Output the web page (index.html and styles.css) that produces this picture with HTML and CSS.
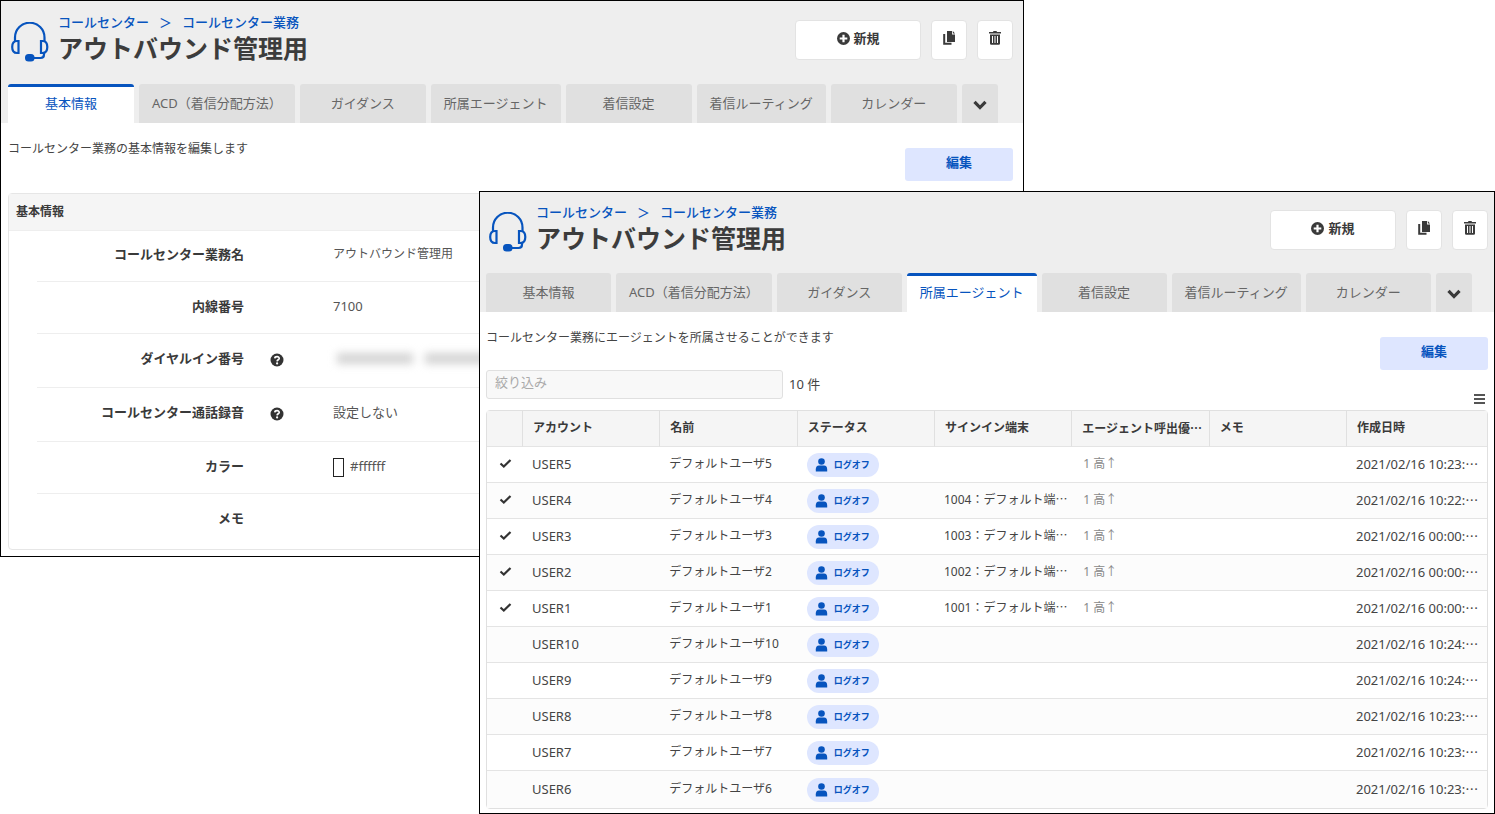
FILE: index.html
```html
<!DOCTYPE html>
<html lang="ja">
<head>
<meta charset="utf-8">
<meta name="viewport" content="width=device-width, initial-scale=1">
<title>コールセンター業務</title>
<link rel="stylesheet" href="styles.css">
</head>
<body>
<svg class="symbols" aria-hidden="true">
  <symbol id="headset" viewBox="0 0 38 40"><g fill="none" stroke="currentColor" stroke-width="2.200"><path d="M4 20V15.500a14.500 14.500 0 0 1 29.500 0V20"/><path d="M7.500 19H6q-4.800 0-4.800 6t4.800 6h1.500zM30 19h1.500q4.800 0 4.800 6t-4.800 6H30z"/><path d="M33 31v1.500q0 3.500-3.500 3.500H21"/></g><rect x="14" y="32" width="9.500" height="7.500" rx="3.500" fill="currentColor"/></symbol>
  <symbol id="plus" viewBox="0 0 12 12"><circle cx="6" cy="6" r="6" fill="currentColor"/><path d="M6 2.500v7M2.500 6h7" stroke="#fff" stroke-width="2"/></symbol>
  <symbol id="copy" viewBox="0 0 12 14"><path d="M4 0h5v3.500h3V11H4z" fill="currentColor"/><path d="M9.800 0L12 2.600H9.800z" fill="currentColor"/><path d="M1.200 3v9.800h7.300" fill="none" stroke="currentColor" stroke-width="2"/></symbol>
  <symbol id="trash" viewBox="0 0 12 14"><path d="M0 1h4l.5-1h3l.5 1h4v1.500H0zM1 3.500h10V12.500a1.300 1.300 0 0 1-1.300 1.300H2.300A1.300 1.300 0 0 1 1 12.500z" fill="currentColor"/><path d="M3.500 5v7M6 5v7M8.500 5v7" stroke="#fff" stroke-width="1"/></symbol>
  <symbol id="chevron" viewBox="0 0 14 10"><path d="M1.500 1.800L7 7.500l5.500-5.700" fill="none" stroke="currentColor" stroke-width="3.200"/></symbol>
  <symbol id="help" viewBox="0 0 14 14"><circle cx="7" cy="7" r="6.500" fill="currentColor"/><path d="M4.800 5.300C5 3.100 9.300 3.100 9.200 5.400 9.100 6.900 7.200 6.700 7.100 8.400" fill="none" stroke="#fff" stroke-width="1.700"/><circle cx="7.100" cy="10.400" r="1.100" fill="#fff"/></symbol>
  <symbol id="check" viewBox="0 0 12 9"><path d="M1 4.500l3.300 3L11 1" fill="none" stroke="currentColor" stroke-width="2.200"/></symbol>
  <symbol id="user" viewBox="0 0 12 14"><circle cx="6" cy="3.500" r="3.300" fill="currentColor"/><path d="M.3 13.500v-2.200Q.3 7.800 3.500 7.600h5q3.200.2 3.200 3.700v2.200z" fill="currentColor"/></symbol>
  <symbol id="menu" viewBox="0 0 11 10"><path d="M0 1h11M0 5h11M0 9h11" stroke="currentColor" stroke-width="2"/></symbol>
</svg>

<div class="stage">
  <section class="window window-back">
    <header class="window-head">
      <div class="title-row">
        <svg class="headset"><use href="#headset"/></svg>
        <div class="titles">
          <nav class="crumbs"><a href="#">コールセンター</a><span class="sep">＞</span><a href="#">コールセンター業務</a></nav>
          <h1>アウトバウンド管理用</h1>
        </div>
        <div class="actions">
          <button class="btn btn-new" type="button"><svg class="ico-plus"><use href="#plus"/></svg>新規</button>
          <button class="btn btn-icon" type="button" aria-label="コピー"><svg class="ico-act"><use href="#copy"/></svg></button>
          <button class="btn btn-icon" type="button" aria-label="削除"><svg class="ico-act"><use href="#trash"/></svg></button>
        </div>
      </div>
      <nav class="tabs">
        <button class="tab active" type="button">基本情報</button>
        <button class="tab" type="button">ACD（着信分配方法）</button>
        <button class="tab" type="button">ガイダンス</button>
        <button class="tab" type="button">所属エージェント</button>
        <button class="tab" type="button">着信設定</button>
        <button class="tab" type="button">着信ルーティング</button>
        <button class="tab" type="button">カレンダー</button>
        <button class="tab more" type="button" aria-label="その他"><svg><use href="#chevron"/></svg></button>
      </nav>
    </header>
    <div class="window-body">
      <div class="intro"><p>コールセンター業務の基本情報を編集します</p><button class="edit" type="button">編集</button></div>
      <section class="card">
        <h2>基本情報</h2>
        <dl class="fields">
          <div class="field"><dt>コールセンター業務名</dt><dd class="small">アウトバウンド管理用</dd></div>
          <div class="field"><dt>内線番号</dt><dd>7100</dd></div>
          <div class="field tall"><dt>ダイヤルイン番号</dt><dd><svg class="help"><use href="#help"/></svg><span class="masked"><i class="mask-a"></i><i class="mask-b"></i></span></dd></div>
          <div class="field tall"><dt>コールセンター通話録音</dt><dd><svg class="help"><use href="#help"/></svg>設定しない</dd></div>
          <div class="field"><dt>カラー</dt><dd><span class="swatch"></span>#ffffff</dd></div>
          <div class="field"><dt>メモ</dt><dd></dd></div>
        </dl>
      </section>
    </div>
  </section>

  <section class="window window-front">
    <header class="window-head">
      <div class="title-row">
        <svg class="headset"><use href="#headset"/></svg>
        <div class="titles">
          <nav class="crumbs"><a href="#">コールセンター</a><span class="sep">＞</span><a href="#">コールセンター業務</a></nav>
          <h1>アウトバウンド管理用</h1>
        </div>
        <div class="actions">
          <button class="btn btn-new" type="button"><svg class="ico-plus"><use href="#plus"/></svg>新規</button>
          <button class="btn btn-icon" type="button" aria-label="コピー"><svg class="ico-act"><use href="#copy"/></svg></button>
          <button class="btn btn-icon" type="button" aria-label="削除"><svg class="ico-act"><use href="#trash"/></svg></button>
        </div>
      </div>
      <nav class="tabs">
        <button class="tab" type="button">基本情報</button>
        <button class="tab" type="button">ACD（着信分配方法）</button>
        <button class="tab" type="button">ガイダンス</button>
        <button class="tab active" type="button">所属エージェント</button>
        <button class="tab" type="button">着信設定</button>
        <button class="tab" type="button">着信ルーティング</button>
        <button class="tab" type="button">カレンダー</button>
        <button class="tab more" type="button" aria-label="その他"><svg><use href="#chevron"/></svg></button>
      </nav>
    </header>
    <div class="window-body">
      <div class="intro"><p>コールセンター業務にエージェントを所属させることができます</p><button class="edit" type="button">編集</button></div>
      <div class="toolbar">
        <input class="filter" type="text" placeholder="絞り込み" aria-label="絞り込み">
        <span class="count">10 件</span>
        <button class="menu" type="button" aria-label="メニュー"><svg><use href="#menu"/></svg></button>
      </div>
      <table class="agents">
        <colgroup><col class="col-check"><col><col><col><col><col><col><col class="col-date"></colgroup>
        <thead><tr><th></th><th>アカウント</th><th>名前</th><th>ステータス</th><th>サインイン端末</th><th>エージェント呼出優<span class="dots">…</span></th><th>メモ</th><th>作成日時</th></tr></thead>
        <tbody>
          <tr><td class="mark"><svg><use href="#check"/></svg></td><td class="wide">USER5</td><td>デフォルトユーザ5</td><td><span class="badge"><svg><use href="#user"/></svg>ログオフ</span></td><td></td><td class="rank">1 高↑</td><td></td><td class="wide">2021/02/16 10:23:<span class="dots">…</span></td></tr>
          <tr><td class="mark"><svg><use href="#check"/></svg></td><td class="wide">USER4</td><td>デフォルトユーザ4</td><td><span class="badge"><svg><use href="#user"/></svg>ログオフ</span></td><td>1004：デフォルト端<span class="dots">…</span></td><td class="rank">1 高↑</td><td></td><td class="wide">2021/02/16 10:22:<span class="dots">…</span></td></tr>
          <tr><td class="mark"><svg><use href="#check"/></svg></td><td class="wide">USER3</td><td>デフォルトユーザ3</td><td><span class="badge"><svg><use href="#user"/></svg>ログオフ</span></td><td>1003：デフォルト端<span class="dots">…</span></td><td class="rank">1 高↑</td><td></td><td class="wide">2021/02/16 00:00:<span class="dots">…</span></td></tr>
          <tr><td class="mark"><svg><use href="#check"/></svg></td><td class="wide">USER2</td><td>デフォルトユーザ2</td><td><span class="badge"><svg><use href="#user"/></svg>ログオフ</span></td><td>1002：デフォルト端<span class="dots">…</span></td><td class="rank">1 高↑</td><td></td><td class="wide">2021/02/16 00:00:<span class="dots">…</span></td></tr>
          <tr><td class="mark"><svg><use href="#check"/></svg></td><td class="wide">USER1</td><td>デフォルトユーザ1</td><td><span class="badge"><svg><use href="#user"/></svg>ログオフ</span></td><td>1001：デフォルト端<span class="dots">…</span></td><td class="rank">1 高↑</td><td></td><td class="wide">2021/02/16 00:00:<span class="dots">…</span></td></tr>
          <tr><td></td><td class="wide">USER10</td><td>デフォルトユーザ10</td><td><span class="badge"><svg><use href="#user"/></svg>ログオフ</span></td><td></td><td></td><td></td><td class="wide">2021/02/16 10:24:<span class="dots">…</span></td></tr>
          <tr><td></td><td class="wide">USER9</td><td>デフォルトユーザ9</td><td><span class="badge"><svg><use href="#user"/></svg>ログオフ</span></td><td></td><td></td><td></td><td class="wide">2021/02/16 10:24:<span class="dots">…</span></td></tr>
          <tr><td></td><td class="wide">USER8</td><td>デフォルトユーザ8</td><td><span class="badge"><svg><use href="#user"/></svg>ログオフ</span></td><td></td><td></td><td></td><td class="wide">2021/02/16 10:23:<span class="dots">…</span></td></tr>
          <tr><td></td><td class="wide">USER7</td><td>デフォルトユーザ7</td><td><span class="badge"><svg><use href="#user"/></svg>ログオフ</span></td><td></td><td></td><td></td><td class="wide">2021/02/16 10:23:<span class="dots">…</span></td></tr>
          <tr><td></td><td class="wide">USER6</td><td>デフォルトユーザ6</td><td><span class="badge"><svg><use href="#user"/></svg>ログオフ</span></td><td></td><td></td><td></td><td class="wide">2021/02/16 10:23:<span class="dots">…</span></td></tr>
        </tbody>
      </table>
    </div>
  </section>
</div>
</body>
</html>
```
FILE: styles.css
```css
* { box-sizing: border-box; }
body {
  margin: 0;
  background: #fff;
  color: #444;
  font-family: "Noto Sans", "Noto Sans CJK JP", sans-serif;
  font-size: 13px;
  line-height: 20px;
}
button, input { font: inherit; color: inherit; margin: 0; }
button { border: 0; cursor: pointer; white-space: nowrap; }
h1, h2, p, dl, dd { margin: 0; }
svg { display: block; flex: none; }
.symbols { display: none; }

/* Two overlapping windows */
.stage { position: relative; display: flow-root; }
.window { border: 1px solid #000; background: #fff; overflow: hidden; }
.window-back {
  position: absolute;
  top: 0;
  left: 0;
  width: 68.5%;
  --top: 11px;
  --gap: 20px;
  --left: 7px;
  --right: 10px;
  --bottom: 6px;
  --after-intro: 12px;
  --tab: 126px;
}
.window-front {
  position: relative;
  margin: 191px 0 0 479px;
  --top: 10px;
  --gap: 19px;
  --left: 6px;
  --right: 6px;
  --bottom: 4px;
  --after-intro: 0px;
  --tab: 125px;
}

.window-head { background: #eee; padding: var(--top) var(--right) 0 var(--left); }
.title-row { display: flex; align-items: flex-start; margin-bottom: var(--gap); }
.headset { width: 38px; height: 40px; margin: 10px 9px 0 3px; color: #0754be; }
.crumbs { display: flex; font-weight: 500; color: #0754be; }
.crumbs a { color: inherit; text-decoration: none; }
.sep { margin: 0 10px; }
h1 { font-size: 25px; line-height: 32px; color: #3c3c3c; white-space: nowrap; }
.actions { display: flex; gap: 10px; margin: 8px 0 0 auto; }
.btn {
  display: flex;
  align-items: center;
  justify-content: center;
  height: 40px;
  padding: 0 0 4px;
  border: 1px solid #e3e3e3;
  border-radius: 4px;
  background: #fff;
  color: #3a3a3a;
  font-weight: 700;
}
.btn-new { width: 126px; gap: 4px; }
.btn-icon { width: 36px; }
.ico-plus { width: 13px; height: 13px; }
.ico-act { width: 12px; height: 14px; }

.tabs { display: flex; gap: 5px; }
.tab {
  min-width: var(--tab);
  height: 39px;
  padding: 0 13px 2px;
  border-radius: 3px 3px 0 0;
  background: #e0e0e0;
  color: #666;
}
.tab.active { background: #fff; border-top: 3px solid #0754be; padding-bottom: 5px; color: #0754be; }
.tab.more { min-width: 36px; padding: 3px 11px 0; color: #3a3a3a; }
.tab.more svg { width: 14px; height: 10px; }

.window-body { padding: 15px var(--right) var(--bottom) var(--left); }
.intro { display: flex; justify-content: space-between; margin-bottom: var(--after-intro); font-size: 12px; }
.intro p { padding-top: 1px; }
.edit {
  width: 108px;
  height: 33px;
  margin-top: 10px;
  padding: 0 0 5px;
  border-radius: 3px;
  background: #dee6ff;
  color: #0754be;
  font-size: 13px;
  font-weight: 700;
}

/* Basic information card */
.card { border: 1px solid #e6e6e6; border-radius: 4px; padding-bottom: 3px; }
.card h2 { padding: 8px 7px; background: #f5f5f5; border-bottom: 1px solid #eee; font-size: 12px; color: #3a3a3a; }
.fields { margin-left: 28px; }
.field { display: grid; grid-template-columns: 207px 1fr; height: 52px; padding-bottom: 4px; align-items: center; border-bottom: 1px solid #eee; }
.field:first-child { height: 51px; }
.field.tall { height: 54px; padding-bottom: 5px; }
.field:last-child { border-bottom: 0; }
.field dt { text-align: right; font-weight: 700; color: #3a3a3a; white-space: nowrap; }
.field dd { display: flex; align-items: center; padding-left: 89px; color: #555; }
.field dd.small { font-size: 12px; }
.help { width: 14px; height: 14px; margin: 4px 49px 0 -63px; color: #333; }
.masked { display: flex; gap: 12px; padding-left: 4px; filter: blur(4px); }
.masked i { height: 11px; background: #d4d4d4; }
.mask-a { width: 76px; }
.mask-b { width: 66px; }
.swatch { width: 11px; height: 19px; margin-right: 6px; margin-top: 3px; border: 1px solid #222; background: #fff; }

/* Agent list */
.toolbar { display: flex; align-items: flex-end; padding-bottom: 6px; }
.filter {
  width: 297px;
  height: 29px;
  margin-bottom: 5px;
  padding: 0 8px 5px;
  border: 1px solid #e0e0e0;
  border-radius: 3px;
  background: #f8f8f8;
}
.filter::placeholder { color: #aaa; opacity: 1; }
.count { margin: 0 0 10px 6px; }
.menu { margin: 0 3px 0 auto; padding: 0; background: none; color: #555; }
.menu svg { width: 11px; height: 10px; }
.agents {
  width: 100%;
  table-layout: fixed;
  border: 1px solid #e0e0e0;
  border-radius: 4px;
  border-spacing: 0;
  font-size: 12px;
}
.col-check { width: 35px; }
.col-date { width: 141px; }
.agents th, .agents td { height: 36px; padding: 0 0 2px 10px; text-align: left; white-space: nowrap; overflow: hidden; border-bottom: 1px solid #e4e4e4; }
.agents th { padding-bottom: 1px; background: #f5f5f5; color: #3a3a3a; }
.agents th + th { border-left: 1px solid #e0e0e0; }
.agents tbody tr:nth-child(even) { background: #fcfcfc; }
.agents tbody tr:last-child td { height: 37px; border-bottom: 0; }
.agents .wide { padding-bottom: 2px; font-size: 13px; }
.agents .mark { padding: 0 0 2px 12px; color: #333; }
.mark svg { width: 13px; height: 9px; }
.agents .rank { padding-left: 12px; color: #888; }
.dots { font-family: "Noto Sans CJK JP", sans-serif; }
.badge {
  display: flex;
  align-items: center;
  gap: 6px;
  width: 72px;
  height: 24px;
  margin-top: 2px;
  padding-left: 8px;
  border-radius: 12px;
  background: #dee6ff;
  color: #0754be;
  font-size: 9px;
  font-weight: 700;
}
.badge svg { width: 13px; height: 14px; }
```
